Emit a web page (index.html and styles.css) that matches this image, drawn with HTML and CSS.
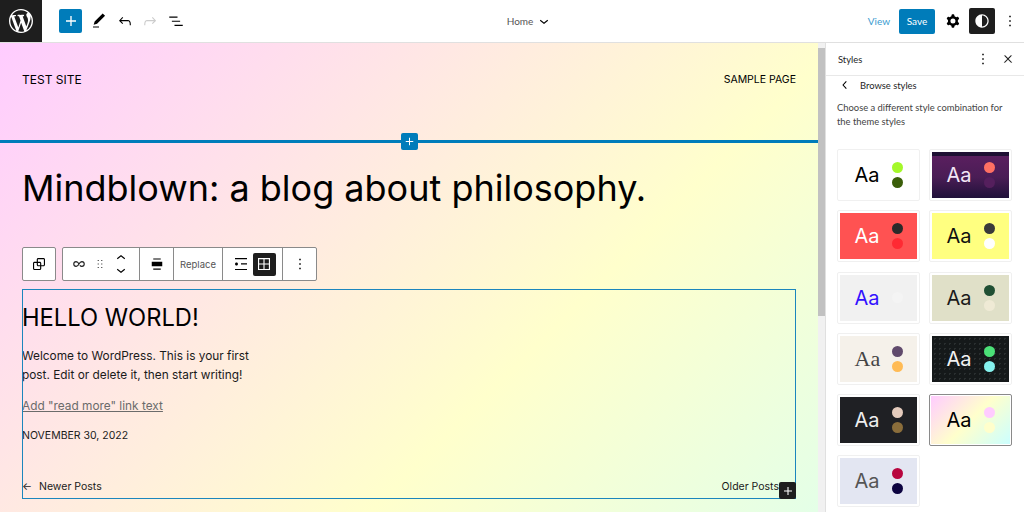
FILE: index.html
```html
<!DOCTYPE html>
<html lang="en">
<head>
    <meta charset="UTF-8">
    <meta name="viewport" content="width=device-width, initial-scale=1.0">
    <title>Site Editor</title>
    <link rel="stylesheet" href="styles.css">
</head>
<body>
    <!-- Top bar -->
    <div class="topbar">
        <div class="topbar-left">
            <a class="wp-logo" href="#">
                <svg width="24" height="24" viewBox="0 0 20 20" fill="#fff"><path d="M20 10c0-5.51-4.49-10-10-10C4.48 0 0 4.49 0 10c0 5.52 4.48 10 10 10 5.51 0 10-4.48 10-10zM7.78 15.37L4.37 6.22c.55-.02 1.17-.08 1.17-.08.5-.06.44-1.13-.06-1.11 0 0-1.45.11-2.37.11-.18 0-.37 0-.58-.01C4.12 2.69 6.87 1.11 10 1.11c2.33 0 4.45.87 6.05 2.34-.68-.11-1.65.39-1.65 1.58 0 .74.45 1.36.9 2.1.35.61.55 1.36.55 2.46 0 1.49-1.4 5-1.4 5l-3.03-8.37c.54-.02.82-.17.82-.17.5-.05.44-1.25-.06-1.22 0 0-1.44.12-2.38.12-.87 0-2.33-.12-2.33-.12-.5-.03-.56 1.2-.06 1.22l.92.08 1.26 3.41zM17.41 10c.24-.64.74-1.87.43-4.25.7 1.29 1.05 2.71 1.05 4.25 0 3.29-1.73 6.24-4.4 7.78.97-2.59 1.94-5.2 2.92-7.78zM6.1 18.09C3.12 16.65 1.11 13.53 1.11 10c0-1.3.23-2.48.72-3.59C3.25 10.3 4.67 14.2 6.1 18.09zm4.03-6.63l2.58 6.98c-.86.29-1.76.45-2.71.45-.79 0-1.57-.11-2.29-.33.81-2.38 1.62-4.74 2.42-7.1z"/></svg>
            </a>
            <button class="add-btn">
                <svg width="20" height="20" viewBox="0 0 24 24" fill="#fff"><path d="M18 11.2h-5.2V6h-1.6v5.2H6v1.6h5.2V18h1.6v-5.2H18z"/></svg>
            </button>
            <div class="tool-icons">
                <svg width="18" height="18" viewBox="0 0 24 24"><path d="M20.1 5.1L16.9 2 6.2 12.7l-1.3 4.4 4.5-1.3L20.1 5.1zM4 20.8h8v-1.5H4v1.5z"/></svg>
                <svg width="18" height="18" viewBox="0 0 24 24"><path d="M18.3 11.7c-.6-.6-1.4-.9-2.3-.9H6.7l2.9-3.3-1.1-1-4.5 5L8.5 16l1-1-2.7-2.7H16c.5 0 .9.2 1.3.5 1 1 1 3.4 1 4.5v.3h1.5v-.2c0-1.5 0-4.3-1.5-5.7z"/></svg>
                <svg class="disabled" width="18" height="18" viewBox="0 0 24 24"><path d="M15.6 6.5l-1.1 1 2.9 3.3H8c-.9 0-1.7.3-2.3.9-1.4 1.5-1.4 4.2-1.4 5.6v.2h1.5v-.3c0-1.1 0-3.5 1-4.5.3-.3.7-.5 1.3-.5h9.2L14.5 15l1.1 1.1 4.6-4.6-4.6-5z"/></svg>
                <svg width="18" height="18" viewBox="0 0 24 24"><path d="M3 6h11v1.5H3V6zm3.5 5.5h11V13h-11v-1.5zM21 17H10v1.5h11V17z"/></svg>
            </div>
        </div>
        <div class="topbar-center">
            <span>Home</span>
            <svg width="18" height="18" viewBox="0 0 24 24"><path d="M17.5 11.6L12 16l-5.5-4.4.9-1.2L12 14l4.5-3.6 1 1.2z"/></svg>
        </div>
        <div class="topbar-right">
            <a class="view-link" href="#">View</a>
            <button class="save-btn">Save</button>
            <svg class="cog" width="20" height="20" viewBox="0 0 24 24"><path fill-rule="evenodd" d="M10.289 4.836A1 1 0 0111.275 4h1.306a1 1 0 01.987.836l.244 1.466c.787.26 1.503.679 2.108 1.218l1.393-.522a1 1 0 011.216.437l.653 1.13a1 1 0 01-.23 1.273l-1.148.944a6.025 6.025 0 010 2.435l1.149.946a1 1 0 01.23 1.272l-.653 1.13a1 1 0 01-1.216.437l-1.394-.522c-.605.54-1.32.958-2.108 1.218l-.244 1.466a1 1 0 01-.987.836h-1.306a1 1 0 01-.986-.836l-.244-1.466a5.995 5.995 0 01-2.108-1.218l-1.394.522a1 1 0 01-1.217-.436l-.653-1.131a1 1 0 01.23-1.272l1.149-.946a6.026 6.026 0 010-2.435l-1.148-.944a1 1 0 01-.23-1.272l.653-1.131a1 1 0 011.217-.437l1.393.522a5.994 5.994 0 012.108-1.218l.244-1.466zM14.929 12a3 3 0 11-6 0 3 3 0 016 0z"/></svg>
            <button class="styles-btn">
                <svg width="20" height="20" viewBox="0 0 24 24" fill="#fff"><path d="M12 4c-4.4 0-8 3.6-8 8v.1c0 4.3 3.5 7.8 7.8 7.9h.2c4.4 0 8-3.6 8-8s-3.6-8-8-8zm0 14.5V5.5c3.6 0 6.5 2.9 6.5 6.5s-2.9 6.5-6.5 6.5z"/></svg>
            </button>
            <svg class="more" width="18" height="18" viewBox="0 0 24 24"><path d="M13 19h-2v-2h2v2zm0-6h-2v-2h2v2zm0-6h-2V5h2v2z"/></svg>
        </div>
    </div>

    <div class="workspace">
        <!-- Canvas -->
        <main class="canvas">
            <header class="site-header">
                <span>TEST SITE</span>
                <span class="site-nav">SAMPLE PAGE</span>
            </header>
            <div class="separator">
                <button class="inserter inserter-blue">
                    <svg width="15" height="15" viewBox="0 0 24 24" fill="#fff"><path d="M18 11.2h-5.2V6h-1.6v5.2H6v1.6h5.2V18h1.6v-5.2H18z"/></svg>
                </button>
            </div>
            <h1 class="page-title">Mindblown: a blog about philosophy.</h1>

            <!-- Block toolbar -->
            <div class="block-toolbar">
                <div class="tb-group">
                    <span class="tb-item">
                        <svg width="18" height="18" viewBox="0 0 24 24"><path d="M18 4h-7c-1.1 0-2 .9-2 2v3H6c-1.1 0-2 .9-2 2v7c0 1.1.9 2 2 2h7c1.1 0 2-.9 2-2v-3h3c1.1 0 2-.9 2-2V6c0-1.1-.9-2-2-2zm-4.5 14c0 .3-.2.5-.5.5H6c-.3 0-.5-.2-.5-.5v-7c0-.3.2-.5.5-.5h3V13c0 1.1.9 2 2 2h2.5v3zm0-4.5H11c-.3 0-.5-.2-.5-.5v-2.5H13c.3 0 .5.2.5.5v2.5zm5-.5c0 .3-.2.5-.5.5h-3V11c0-1.1-.9-2-2-2h-2.5V6c0-.3.2-.5.5-.5h7c.3 0 .5.2.5.5v7z"/></svg>
                    </span>
                </div>
                <div class="tb-group">
                    <div class="tb-section tb-mover">
                        <svg width="18" height="18" viewBox="0 0 24 24" fill="none" stroke="#1e1e1e" stroke-width="1.5"><path d="M12 12c-1-2-2-3.2-3.8-3.2A3.3 3.3 0 0 0 5 12a3.3 3.3 0 0 0 3.2 3.2c1.8 0 2.8-1.2 3.8-3.2s2-3.2 3.8-3.2A3.3 3.3 0 0 1 19 12a3.3 3.3 0 0 1-3.2 3.2c-1.2 0-2-.5-2.7-1.3"/></svg>
                        <svg width="14" height="18" viewBox="0 0 24 24" fill="#444"><path d="M8 7h2V5H8v2zm0 6h2v-2H8v2zm0 6h2v-2H8v2zm6-14v2h2V5h-2zm0 8h2v-2h-2v2zm0 6h2v-2h-2v2z"/></svg>
                        <span class="mover-arrows">
                            <svg width="18" height="18" viewBox="0 0 24 24"><path d="M6.5 12.4L12 8l5.5 4.4-.9 1.2L12 10l-4.5 3.6-1-1.2z"/></svg>
                            <svg width="18" height="18" viewBox="0 0 24 24"><path d="M17.5 11.6L12 16l-5.5-4.4.9-1.2L12 14l4.5-3.6 1 1.2z"/></svg>
                        </span>
                    </div>
                    <div class="tb-section tb-align">
                        <svg width="18" height="18" viewBox="0 0 24 24"><path d="M5 15h14V9H5v6zM7 4.5h10V6H7zM7 18h10v1.5H7z"/></svg>
                    </div>
                    <div class="tb-section tb-replace">Replace</div>
                    <div class="tb-section tb-layout">
                        <svg width="18" height="18" viewBox="0 0 24 24"><path d="M4 4v1.5h16V4H4zm8 8.5h8V11h-8v1.5zM4 20h16v-1.5H4V20zm4-8c0-1.1-.9-2-2-2s-2 .9-2 2 .9 2 2 2 2-.9 2-2z"/></svg>
                        <span class="tb-active">
                            <svg width="18" height="18" viewBox="0 0 24 24" fill="#fff"><path d="M20 4H4v16h16V4zm-1.5 1.5v5.75h-5.75V5.5h5.75zM11.25 5.5v5.75H5.5V5.5h5.75zM5.5 12.75h5.75v5.75H5.5v-5.75zm7.25 5.75v-5.75h5.75v5.75h-5.75z"/></svg>
                        </span>
                    </div>
                    <div class="tb-section tb-more">
                        <svg width="18" height="18" viewBox="0 0 24 24"><path d="M13 19h-2v-2h2v2zm0-6h-2v-2h2v2zm0-6h-2V5h2v2z"/></svg>
                    </div>
                </div>
            </div>

            <!-- Selected query block -->
            <section class="query-block">
                <h2>HELLO WORLD!</h2>
                <p class="excerpt">Welcome to WordPress. This is your first<br>post. Edit or delete it, then start writing!</p>
                <a class="read-more" href="#">Add "read more" link text</a>
                <div class="post-date">NOVEMBER 30, 2022</div>
                <div class="pagination">
                    <span><span class="arrow">←</span>Newer Posts</span>
                    <span>Older Posts</span>
                </div>
                <button class="inserter inserter-dark">
                    <svg width="16" height="16" viewBox="0 0 24 24" fill="#fff"><path d="M18 11.2h-5.2V6h-1.6v5.2H6v1.6h5.2V18h1.6v-5.2H18z"/></svg>
                </button>
            </section>
        </main>

        <div class="scrollbar">
            <span class="scroll-arrow up"></span>
            <div class="scroll-thumb"></div>
            <span class="scroll-arrow down"></span>
        </div>

        <!-- Styles sidebar -->
        <aside class="sidebar">
            <div class="sidebar-header">
                <span class="sidebar-title">Styles</span>
                <span class="sidebar-actions">
                    <svg width="18" height="18" viewBox="0 0 24 24"><path d="M13 19h-2v-2h2v2zm0-6h-2v-2h2v2zm0-6h-2V5h2v2z"/></svg>
                    <svg width="12" height="12" viewBox="0 0 24 24"><path d="M13 11.8l6.1-6.3-1-1-6.1 6.2-6.1-6.2-1 1 6.1 6.3-6.5 6.7 1 1 6.5-6.6 6.5 6.6 1-1z" stroke="#1e1e1e" stroke-width=".6"/></svg>
                </span>
            </div>
            <div class="browse-head">
                <svg width="16" height="16" viewBox="0 0 24 24"><path d="M14.6 7l-1.2-1L8 12l5.4 6 1.2-1-4.6-5z"/></svg>
                <span>Browse styles</span>
            </div>
            <p class="browse-desc">Choose a different style combination for the theme styles</p>
            <div class="style-grid">
                <div class="style-card"><div class="preview s-default"><span class="aa">Aa</span><span class="dots"><i></i><i></i></span></div></div>
                <div class="style-card"><div class="preview s-purple"><span class="aa">Aa</span><span class="dots"><i></i><i></i></span></div></div>
                <div class="style-card"><div class="preview s-red"><span class="aa">Aa</span><span class="dots"><i></i><i></i></span></div></div>
                <div class="style-card"><div class="preview s-yellow"><span class="aa">Aa</span><span class="dots"><i></i><i></i></span></div></div>
                <div class="style-card"><div class="preview s-blue"><span class="aa">Aa</span><span class="dots"><i></i></span></div></div>
                <div class="style-card"><div class="preview s-olive"><span class="aa">Aa</span><span class="dots"><i></i><i></i></span></div></div>
                <div class="style-card"><div class="preview s-cream"><span class="aa">Aa</span><span class="dots"><i></i><i></i></span></div></div>
                <div class="style-card"><div class="preview s-dots"><span class="aa">Aa</span><span class="dots"><i></i><i></i></span></div></div>
                <div class="style-card"><div class="preview s-dark"><span class="aa">Aa</span><span class="dots"><i></i><i></i></span></div></div>
                <div class="style-card selected"><div class="preview s-pastel"><span class="aa">Aa</span><span class="dots"><i></i><i></i></span></div></div>
                <div class="style-card"><div class="preview s-lilac"><span class="aa">Aa</span><span class="dots"><i></i><i></i></span></div></div>
            </div>
        </aside>
    </div>
</body>
</html>
```

FILE: styles.css
```css
* {
    box-sizing: border-box;
}

body {
    margin: 0;
    height: 512px;
    overflow: hidden;
    display: flex;
    flex-direction: column;
    font-family: Lato, sans-serif;
    color: #1e1e1e;
    background: #fff;
}

svg {
    display: block;
    flex-shrink: 0;
}

button {
    border: none;
    padding: 0;
    display: flex;
    align-items: center;
    justify-content: center;
    font-family: inherit;
}

/* Top bar */
.topbar {
    height: 43px;
    flex-shrink: 0;
    display: grid;
    grid-template-columns: 1fr auto 1fr;
    align-items: center;
    border-bottom: 1px solid #e0e0e0;
}

.topbar-left {
    display: flex;
    align-items: center;
    height: 42px;
}

.wp-logo {
    width: 42px;
    height: 42px;
    background: #1e1e1e;
    display: flex;
    align-items: center;
    justify-content: center;
}

.add-btn {
    width: 23px;
    height: 24px;
    margin-left: 17px;
    background: #007cba;
    border-radius: 2px;
}

.tool-icons {
    display: flex;
    gap: 7.6px;
    margin-left: 8px;
}

.tool-icons .disabled {
    fill: #ccc;
}

.topbar-center {
    display: flex;
    align-items: center;
    gap: 2px;
    padding-left: 36px;
    font-size: 10px;
    color: #555;
}

.topbar-right {
    display: flex;
    align-items: center;
    justify-content: flex-end;
}

.view-link {
    font-size: 10px;
    color: #3a9bd0;
    text-decoration: none;
}

.save-btn {
    width: 36px;
    height: 25px;
    margin-left: 9px;
    background: #007cba;
    color: #fff;
    font-size: 10px;
    border-radius: 2px;
}

.cog {
    margin-left: 8px;
}

.styles-btn {
    width: 26px;
    height: 26px;
    margin-left: 6px;
    background: #1e1e1e;
    border-radius: 2px;
}

.more {
    margin: 0 5px 0 6px;
}

/* Main area */
.workspace {
    flex: 1;
    display: flex;
    min-height: 0;
}

.canvas {
    width: 818px;
    flex-shrink: 0;
    padding: 0 22px;
    overflow: hidden;
    font-family: Inter, sans-serif;
    color: #000;
    background: linear-gradient(135deg, #ffccff 0%, #ffffcc 50%, #ccffff 100%) no-repeat;
    background-size: 100% 860px;
}

.site-header {
    display: flex;
    justify-content: space-between;
    align-items: center;
    padding-bottom: 24px;
    height: 97px;
    font-size: 12px;
    line-height: 15px;
}

.site-nav {
    font-size: 10.5px;
}

.separator {
    position: relative;
    height: 3px;
    margin: 0 -22px;
    background: #007cba;
}

.inserter {
    position: absolute;
    width: 17px;
    height: 17px;
    border-radius: 2px;
}

.inserter-blue {
    left: 401px;
    top: -7px;
    background: #007cba;
}

.inserter-dark {
    right: 0;
    bottom: 0;
    background: #1e1e1e;
}

.page-title {
    margin: 22px 0 0;
    font-size: 36px;
    font-weight: 400;
    line-height: 46px;
    white-space: nowrap;
}

/* Block toolbar */
.block-toolbar {
    display: flex;
    gap: 6px;
    margin-top: 36px;
    height: 34px;
    color: #1e1e1e;
}

.tb-group {
    display: flex;
    background: #fff;
    border: 1px solid #8a8a8a;
    border-radius: 2px;
}

.tb-item {
    width: 32px;
    display: flex;
    align-items: center;
    justify-content: center;
}

.tb-section {
    display: flex;
    align-items: center;
    justify-content: center;
    border-left: 1px solid #8a8a8a;
}

.tb-section:first-child {
    border-left: none;
}

.tb-mover {
    width: 76px;
    gap: 5px;
    padding-right: 2px;
}

.mover-arrows {
    display: flex;
    flex-direction: column;
}

.mover-arrows svg:first-child {
    margin-bottom: -6px;
}

.tb-align {
    width: 34px;
}

.tb-replace {
    width: 49px;
    font-size: 9.5px;
    color: #555;
}

.tb-layout {
    width: 60px;
    gap: 3px;
    padding-left: 2px;
}

.tb-active {
    width: 23px;
    height: 23px;
    background: #1e1e1e;
    border-radius: 2px;
    display: flex;
    align-items: center;
    justify-content: center;
}

.tb-more {
    width: 34px;
}

/* Query block */
.query-block {
    position: relative;
    height: 210px;
    margin-top: 8px;
    outline: 1px solid #1b86bd;
    outline-offset: -1px;
    color: #1a1a1a;
}

.query-block h2 {
    margin: 0;
    padding-top: 14px;
    font-size: 23.7px;
    line-height: 30px;
    font-weight: 400;
    color: #000;
}

.excerpt {
    margin: 14px 0 0;
    font-size: 11.85px;
    line-height: 19px;
}

.read-more {
    display: inline-block;
    margin-top: 12px;
    font-size: 11.85px;
    line-height: 19px;
    color: #6b6b6b;
}

.post-date {
    margin-top: 12px;
    font-size: 10.5px;
    line-height: 16px;
}

.pagination {
    display: flex;
    justify-content: space-between;
    padding-right: 17px;
    margin-top: 35px;
    font-size: 10.5px;
    line-height: 16px;
}

.arrow {
    margin-right: 7px;
}

/* Scrollbar */
.scrollbar {
    width: 7px;
    flex-shrink: 0;
    display: flex;
    flex-direction: column;
    background: #f1f1f1;
}

.scroll-arrow {
    height: 5px;
    flex-shrink: 0;
    position: relative;
}

.scroll-arrow.down {
    margin-top: auto;
}

.scroll-thumb {
    height: 268px;
    background: #c1c1c1;
}

/* Sidebar */
.sidebar {
    flex: 1;
    border-left: 1px solid #e0e0e0;
    padding: 0 12px 0 11px;
}

.sidebar-header {
    height: 33px;
    margin: 0 -12px 0 -11px;
    padding: 0 10px 0 12px;
    display: flex;
    align-items: center;
    justify-content: space-between;
    border-bottom: 1px solid #e8e8e8;
}

.sidebar-title {
    font-size: 9.4px;
}

.sidebar-actions {
    display: flex;
    align-items: center;
    gap: 10px;
}

.browse-head {
    display: flex;
    align-items: center;
    gap: 7px;
    height: 18px;
    font-size: 9.4px;
}

.browse-desc {
    margin: 7px 0 0;
    font-size: 9.4px;
    line-height: 14px;
    color: #444;
}

.style-grid {
    display: grid;
    grid-template-columns: 83px 83px;
    grid-auto-rows: 52px;
    column-gap: 9px;
    row-gap: 9.3px;
    margin-top: 20px;
}

.style-card {
    padding: 2px;
    border: 1px solid #f0f0f0;
    border-radius: 2px;
    background: #fff;
}

.style-card.selected {
    padding: 1px;
    border: 1px solid #8a8a8a;
}

.preview {
    height: 100%;
    display: flex;
    align-items: center;
    justify-content: center;
    gap: 13px;
}

.aa {
    width: 24px;
    font-family: Inter, sans-serif;
    font-size: 20px;
    line-height: 24px;
    white-space: nowrap;
}

.dots {
    display: flex;
    flex-direction: column;
    gap: 4px;
}

.dots i {
    display: block;
    width: 11px;
    height: 11px;
    border-radius: 50%;
}

.s-default { background: #fff; color: #000; }
.s-default i:first-child { background: #a4f82a; }
.s-default i:last-child { background: #3b5e0a; }

.s-purple { background: linear-gradient(#1e1033 0 4px, #5a1f5f 4px, #4a1d55 55%, #20113a 100%); color: #f3e6f5; }
.s-purple i:first-child { background: #ff7063; }
.s-purple i:last-child { background: #551f5d; }

.s-red { background: #ff5252; color: #fff; }
.s-red i:first-child { background: #2a2a2a; }
.s-red i:last-child { background: #ff2a33; }

.s-yellow { background: #ffff80; color: #111; }
.s-yellow i:first-child { background: #3a3a3a; }
.s-yellow i:last-child { background: #fff; }

.s-blue { background: #f1f1f1; color: #3311ff; }
.s-blue i { background: #f4f4f4; }

.s-olive { background: #e0e0c8; color: #1a1a1a; }
.s-olive i:first-child { background: #1f4f33; }
.s-olive i:last-child { background: #efead5; }

.s-cream { background: #f5f1ea; color: #444; }
.s-cream .aa { font-family: "Liberation Serif", serif; font-size: 22px; }
.s-cream i:first-child { background: #604a6c; }
.s-cream i:last-child { background: #ffbb55; }

.s-dots {
    background-color: #15191a;
    background-image: radial-gradient(#2a2f30 1px, transparent 1px);
    background-size: 5px 5px;
    color: #f2f2f2;
}
.s-dots i:first-child { background: #4be077; }
.s-dots i:last-child { background: #85f2ee; }

.s-dark { background: #1f2024; color: #eee; }
.s-dark i:first-child { background: #e4cbbd; }
.s-dark i:last-child { background: #8a6d3b; }

.s-pastel { background: linear-gradient(135deg, #ffccff, #ffffcc 50%, #ccffff); color: #000; }
.s-pastel i:first-child { background: #ffccff; }
.s-pastel i:last-child { background: #ffffcc; }

.s-lilac { background: #e3e6f2; color: #555; }
.s-lilac i:first-child { background: #b8063f; }
.s-lilac i:last-child { background: #0c0340; }
```
